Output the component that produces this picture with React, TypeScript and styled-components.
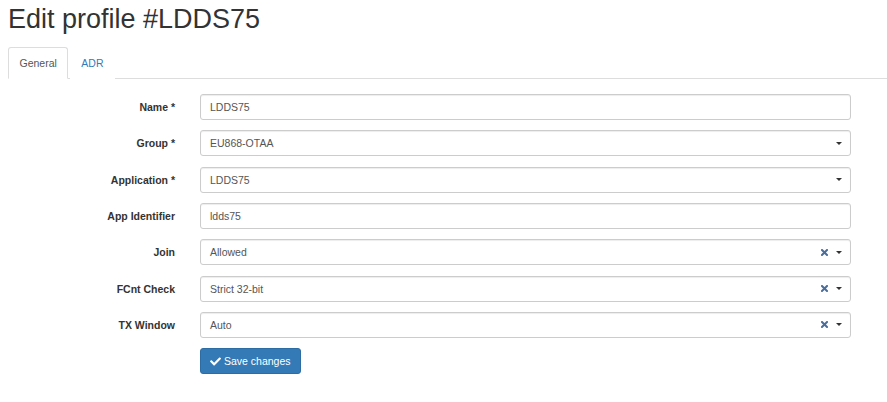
import styled, { createGlobalStyle } from "styled-components";
import { FaCheck } from "react-icons/fa";

const GlobalStyle = createGlobalStyle`
  body {
    margin: 0;
    background: #fff;
    font-family: "Liberation Sans", Arial, sans-serif;
    font-size: 10.5px;
    color: #333;
  }
`;

const Page = styled.div`
  padding: 4px 0 0 8px;
`;

const Title = styled.h1`
  margin: 0 0 13px;
  font-size: 27px;
  line-height: 30px;
  font-weight: 500;
  color: #333;
`;

const TabBar = styled.ul`
  display: flex;
  list-style: none;
  margin: 0;
  padding: 0;
  border-bottom: 1px solid #ddd;
`;

const Tab = styled.li<{ $active?: boolean }>`
  margin: 0 1.5px -1px 0;
  padding: 7.5px 10.5px;
  line-height: 15px;
  border: 1px solid ${(p) => (p.$active ? "#ddd" : "transparent")};
  border-bottom-color: transparent;
  border-radius: 3px 3px 0 0;
  background: #fff;
  color: ${(p) => (p.$active ? "#555" : "#337ab7")};
  cursor: pointer;
`;

const Form = styled.form`
  padding: 15px 36px 0 0;
  display: flex;
  flex-direction: column;
  gap: 10.33px;
`;

const Row = styled.div`
  display: grid;
  grid-template-columns: 167px 1fr;
  column-gap: 25px;
  align-items: center;
`;

const Label = styled.label`
  text-align: right;
  font-weight: bold;
  color: #333;
`;

const Field = styled.div`
  height: 26px;
  box-sizing: border-box;
  border: 1px solid #ccc;
  border-radius: 3px;
  box-shadow: inset 0 1px 1px rgba(0, 0, 0, 0.075);
  display: flex;
  align-items: center;
  padding: 0 8px 0 9px;
  color: #555;
  background: #fff;
`;

const Value = styled.span`
  flex: 1;
`;

const Clear = styled.span`
  display: flex;
  margin-right: 8px;
`;

const Caret = styled.span`
  width: 0;
  height: 0;
  border-top: 3.5px solid #333;
  border-left: 3px solid transparent;
  border-right: 3px solid transparent;
`;

const SaveButton = styled.button`
  display: inline-flex;
  align-items: center;
  gap: 3px;
  height: 25.5px;
  padding: 0 9px;
  font-family: inherit;
  font-size: 10.5px;
  color: #fff;
  background: #337ab7;
  border: 1px solid #2e6da4;
  border-radius: 3px;
  cursor: pointer;
`;

const ButtonCell = styled.div`
  grid-column: 2;
`;

type Kind = "text" | "select" | "clearable";

const rows: { label: string; value: string; required?: boolean; kind: Kind }[] = [
  { label: "Name", value: "LDDS75", required: true, kind: "text" },
  { label: "Group", value: "EU868-OTAA", required: true, kind: "select" },
  { label: "Application", value: "LDDS75", required: true, kind: "select" },
  { label: "App Identifier", value: "ldds75", kind: "text" },
  { label: "Join", value: "Allowed", kind: "clearable" },
  { label: "FCnt Check", value: "Strict 32-bit", kind: "clearable" },
  { label: "TX Window", value: "Auto", kind: "clearable" },
];

function ClearIcon() {
  return (
    <svg width="7" height="7" viewBox="0 0 7 7">
      <path d="M1 1 L6 6 M6 1 L1 6" stroke="#4a6d9c" strokeWidth="2" strokeLinecap="square" />
    </svg>
  );
}

function App() {
  return (
    <Page>
      <GlobalStyle />
      <Title>Edit profile #LDDS75</Title>
      <TabBar>
        <Tab $active>General</Tab>
        <Tab>ADR</Tab>
      </TabBar>
      <Form onSubmit={(e) => e.preventDefault()}>
        {rows.map((r) => (
          <Row key={r.label}>
            <Label>
              {r.label}
              {r.required ? " *" : ""}
            </Label>
            <Field>
              <Value>{r.value}</Value>
              {r.kind === "clearable" && (
                <Clear>
                  <ClearIcon />
                </Clear>
              )}
              {r.kind !== "text" && <Caret />}
            </Field>
          </Row>
        ))}
        <Row>
          <ButtonCell>
            <SaveButton type="submit">
              <FaCheck size={11} />
              Save changes
            </SaveButton>
          </ButtonCell>
        </Row>
      </Form>
    </Page>
  );
}

export default App;
